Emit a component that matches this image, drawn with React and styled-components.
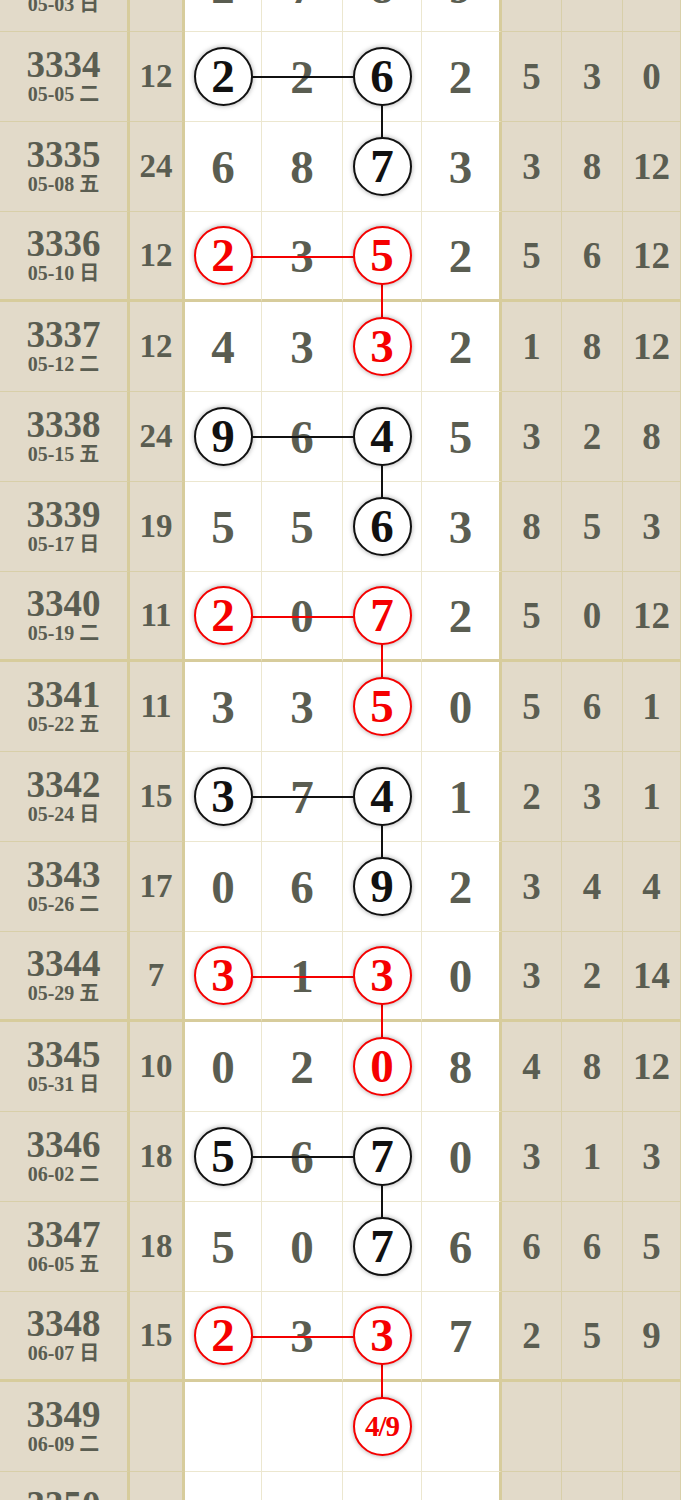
import React from "react";
import styled, { createGlobalStyle } from "styled-components";

const BEIGE = "#e2dac9";
const INK = "#5a5d51";
const LINE_LIGHT = "#ece7cf";
const LINE_DARK = "#d8cfa9";
const LINE_THICK = "#d7cc9c";

const rows = [
  { id: 3333, date: "05-03 日", sum: "", nums: [2, 7, 8, 9], tail: [3, 6, 7], circles: [], color: "black" },
  { id: 3334, date: "05-05 二", sum: 12, nums: [2, 2, 6, 2], tail: [5, 3, 0], circles: [0, 2], link: true, color: "black" },
  { id: 3335, date: "05-08 五", sum: 24, nums: [6, 8, 7, 3], tail: [3, 8, 12], circles: [2], color: "black" },
  { id: 3336, date: "05-10 日", sum: 12, nums: [2, 3, 5, 2], tail: [5, 6, 12], circles: [0, 2], link: true, color: "red" },
  { id: 3337, date: "05-12 二", sum: 12, nums: [4, 3, 3, 2], tail: [1, 8, 12], circles: [2], color: "red" },
  { id: 3338, date: "05-15 五", sum: 24, nums: [9, 6, 4, 5], tail: [3, 2, 8], circles: [0, 2], link: true, color: "black" },
  { id: 3339, date: "05-17 日", sum: 19, nums: [5, 5, 6, 3], tail: [8, 5, 3], circles: [2], color: "black" },
  { id: 3340, date: "05-19 二", sum: 11, nums: [2, 0, 7, 2], tail: [5, 0, 12], circles: [0, 2], link: true, color: "red" },
  { id: 3341, date: "05-22 五", sum: 11, nums: [3, 3, 5, 0], tail: [5, 6, 1], circles: [2], color: "red" },
  { id: 3342, date: "05-24 日", sum: 15, nums: [3, 7, 4, 1], tail: [2, 3, 1], circles: [0, 2], link: true, color: "black" },
  { id: 3343, date: "05-26 二", sum: 17, nums: [0, 6, 9, 2], tail: [3, 4, 4], circles: [2], color: "black" },
  { id: 3344, date: "05-29 五", sum: 7, nums: [3, 1, 3, 0], tail: [3, 2, 14], circles: [0, 2], link: true, color: "red" },
  { id: 3345, date: "05-31 日", sum: 10, nums: [0, 2, 0, 8], tail: [4, 8, 12], circles: [2], color: "red" },
  { id: 3346, date: "06-02 二", sum: 18, nums: [5, 6, 7, 0], tail: [3, 1, 3], circles: [0, 2], link: true, color: "black" },
  { id: 3347, date: "06-05 五", sum: 18, nums: [5, 0, 7, 6], tail: [6, 6, 5], circles: [2], color: "black" },
  { id: 3348, date: "06-07 日", sum: 15, nums: [2, 3, 3, 7], tail: [2, 5, 9], circles: [0, 2], link: true, color: "red" },
  { id: 3349, date: "06-09 二", sum: "", nums: ["", "", "4/9", ""], tail: ["", "", ""], circles: [2], color: "red" },
  { id: 3350, date: "06-12 五", sum: "", nums: ["", "", "", ""], tail: ["", "", ""], circles: [], color: "black" },
];

const GlobalStyle = createGlobalStyle`
  body {
    margin: 0;
    background: #ffffff;
    font-family: "Liberation Serif", "Noto Sans CJK SC", serif;
  }
`;

const Viewport = styled.div`
  width: 681px;
  height: 1500px;
  overflow: hidden;
`;

const Table = styled.div`
  margin-top: -58px;
`;

const Row = styled.div`
  position: relative;
  display: grid;
  grid-template-columns: 130px 55px 77px 81px 79px 80px 60px 61px 58px;
  height: 90px;
`;

const Cell = styled.div`
  box-sizing: border-box;
  height: 90px;
  display: flex;
  align-items: center;
  justify-content: center;
  background: ${(p) => (p.$light ? "#ffffff" : BEIGE)};
  border-right: ${(p) => (p.$heavy ? `3px solid ${LINE_THICK}` : `1px solid ${p.$light ? LINE_LIGHT : LINE_DARK}`)};
  border-bottom: ${(p) =>
    p.$thick ? `3px solid ${LINE_THICK}` : `1px solid ${p.$light ? LINE_LIGHT : LINE_DARK}`};
  color: ${INK};
  font-family: "Liberation Serif", "Noto Sans CJK SC", serif;
  font-weight: 700;
`;

const IdCell = styled(Cell)`
  flex-direction: column;
  gap: 1px;
`;

const IdText = styled.div`
  font-size: 37px;
  line-height: 34px;
`;

const DateText = styled.div`
  font-size: 20px;
  line-height: 22px;
  font-family: "Liberation Serif", "Noto Sans CJK SC", serif;
`;

const SumText = styled.div`
  font-size: 33px;
`;

const NumText = styled.div`
  font-size: 47px;
`;

const TailText = styled.div`
  font-size: 37px;
`;

const Ball = styled.div`
  position: relative;
  z-index: 2;
  box-sizing: border-box;
  width: 59px;
  height: 59px;
  border-radius: 50%;
  border: 2.5px solid ${(p) => (p.$red ? "#f50000" : "#111111")};
  background: #ffffff;
  box-shadow: 0 0 5px rgba(0, 0, 0, 0.35);
  display: flex;
  align-items: center;
  justify-content: center;
  color: ${(p) => (p.$red ? "#f50000" : "#111111")};
  font-size: ${(p) => (p.$small ? "29px" : "47px")};
  letter-spacing: ${(p) => (p.$small ? "-1px" : "0")};
  line-height: 1;
`;

const HLink = styled.div`
  position: absolute;
  z-index: 1;
  left: 223px;
  top: 44px;
  width: 160px;
  height: 2px;
  background: ${(p) => (p.$red ? "#f50000" : "#111111")};
`;

const VLink = styled.div`
  position: absolute;
  z-index: 1;
  left: 381px;
  top: 45px;
  width: 2px;
  height: 90px;
  background: ${(p) => (p.$red ? "#f50000" : "#111111")};
`;

function DrawRow({ row }) {
  const thick = (row.id - 3332) % 4 === 0;
  const red = row.color === "red";
  return (
    <Row>
      <IdCell $heavy $thick={thick}>
        <IdText>{row.id}</IdText>
        <DateText>{row.date}</DateText>
      </IdCell>
      <Cell $heavy $thick={thick}>
        <SumText>{row.sum}</SumText>
      </Cell>
      {row.nums.map((n, i) => (
        <Cell key={i} $light $heavy={i === 3} $thick={thick}>
          {row.circles.includes(i) ? (
            <Ball $red={red} $small={String(n).length > 1}>
              {n}
            </Ball>
          ) : (
            <NumText>{n}</NumText>
          )}
        </Cell>
      ))}
      {row.tail.map((n, i) => (
        <Cell key={i} $thick={thick}>
          <TailText>{n}</TailText>
        </Cell>
      ))}
      {row.link && <HLink $red={red} />}
      {row.link && <VLink $red={red} />}
    </Row>
  );
}

export default function App() {
  return (
    <Viewport>
      <GlobalStyle />
      <Table>
        {rows.map((r) => (
          <DrawRow key={r.id} row={r} />
        ))}
      </Table>
    </Viewport>
  );
}
